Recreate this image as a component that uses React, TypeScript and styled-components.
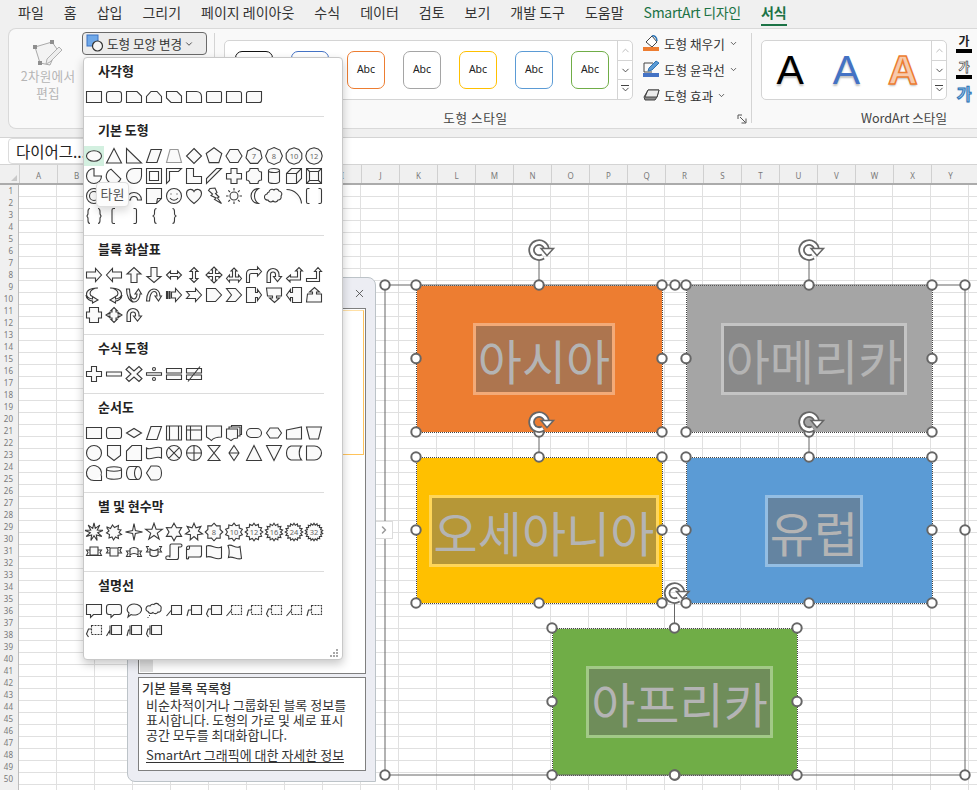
import styled, { createGlobalStyle } from 'styled-components';
import { ChevronDown, ChevronRight, ChevronUp, X } from 'lucide-react';

const GlobalStyle = createGlobalStyle`
    html, body {
        margin: 0;
        padding: 0;
        background: #ffffff;
    }
    * {
        box-sizing: border-box;
    }
`;

/* ---------- shape gallery data ---------- */

type ShapeIcon = { d: string; dash?: string; label?: string; muted?: boolean };

const star = (n: number, r1: number, r2?: number) => {
    const pts: string[] = [];
    const count = r2 ? n * 2 : n;
    for (let i = 0; i < count; i++) {
        const r = r2 && i % 2 === 1 ? r2 : r1;
        const a = (Math.PI * 2 * i) / count - Math.PI / 2;
        pts.push(`${(10 + r * Math.cos(a)).toFixed(1)} ${(10 + r * Math.sin(a)).toFixed(1)}`);
    }
    return `M${pts.join('L')}z`;
};

const circle = 'M2.5 10a7.5 7.5 0 1 0 15 0a7.5 7.5 0 1 0-15 0z';
const rect = 'M2.5 4.5h15v11h-15z';
const roundRect = 'M5 4.5h10a2.5 2.5 0 0 1 2.5 2.5v6a2.5 2.5 0 0 1-2.5 2.5h-10a2.5 2.5 0 0 1-2.5-2.5v-6a2.5 2.5 0 0 1 2.5-2.5z';
const softRect = 'M3.5 4.5h13a1 1 0 0 1 1 1v9a1 1 0 0 1-1 1h-13a1 1 0 0 1-1-1v-9a1 1 0 0 1 1-1z';
const smallBox = 'M7.5 4.5h10v9h-10z';

const p = (...paths: string[]): ShapeIcon[] => paths.map((d) => ({ d }));

const RECTANGLES = p(
    rect,
    roundRect,
    'M2.5 4.5h10.5l4.5 4.5v6.5h-15z',
    'M7 4.5h6l4.5 5v6h-15v-6z',
    'M2.5 4.5h10.5l4.5 4.5v6.5h-10.5l-4.5-4.5z',
    'M2.5 4.5h10a5 5 0 0 1 5 5v6h-15z',
    softRect,
    'M2.5 15.5v-11h13a2 2 0 0 1 2 2v9z',
    'M4.5 4.5h13v9a2 2 0 0 1-2 2h-13v-9a2 2 0 0 1 2-2z',
);

const BASIC: ShapeIcon[] = [
    { d: 'M2.5 10a7.5 5.2 0 1 0 15 0a7.5 5.2 0 1 0-15 0z' },
    { d: 'M10 2.5l7.5 14.5h-15z' },
    { d: 'M2.5 2.5l15 14.5h-15z' },
    { d: 'M7 3.5h10.5l-4.5 13h-10.5z' },
    { d: 'M6 3.5h8l3.5 13h-15z', muted: true },
    { d: 'M10 2.5l7.5 7.5l-7.5 7.5l-7.5-7.5z' },
    { d: star(5, 8.2) },
    { d: 'M6 3.5h8l4 6.5l-4 6.5h-8l-4-6.5z' },
    { d: star(7, 8.2), label: '7' },
    { d: star(8, 8.4), label: '8' },
    { d: star(10, 8.2), label: '10' },
    { d: star(12, 8.2), label: '12' },
    ...p(
        'M10 2.5a7.5 7.5 0 1 0 7.5 7.5h-7.5z',
        'M7 3.2l9.8 9.6a7.5 7.5 0 1 1-9.8-9.6z',
        'M17.5 2.5v7.5a7.5 7.5 0 1 1-7.5-7.5z',
        'M2.5 2.5h15v15h-15zM5.5 5.5v9h9v-9z',
        'M2.5 2.5h15l-3 3h-9v9l-3 3z',
        'M2.5 2.5h7v8h8v7h-15z',
        'M2.5 17.5v-5l10-10h5z',
        'M7 2.5h6v5h4.5v5.5h-4.5v4.5h-6v-4.5h-4.5v-5.5h4.5z',
        'M6 2.5h8a3.5 3.5 0 0 0 3.5 3.5v8a3.5 3.5 0 0 0-3.5 3.5h-8a3.5 3.5 0 0 0-3.5-3.5v-8a3.5 3.5 0 0 0 3.5-3.5z',
        'M4.5 4.5a5.5 2 0 0 1 11 0v11a5.5 2 0 0 1-11 0zM4.5 4.5a5.5 2 0 0 0 11 0',
        'M2.5 7.5l5-5h10v10l-5 5h-10zM2.5 7.5h10v10M12.5 7.5l5-5',
        'M2.5 2.5h15v15h-15zM5.5 5.5h9v9h-9zM2.5 2.5l3 3M17.5 2.5l-3 3M2.5 17.5l3-3M17.5 17.5l-3-3',
        `${circle}M5.5 10a4.5 4.5 0 1 0 9 0a4.5 4.5 0 1 0-9 0z`,
        `${circle}M5 5l10 10`,
        'M2.5 14a7.5 7.5 0 0 1 15 0h-4a3.5 3.5 0 0 0-7 0z',
        'M2.5 2.5h15v10l-5 5h-10zM17.5 12.5h-4l-1 5',
        `${circle}M7 7.5v1M13 7.5v1M6 12c2 3 6 3 8 0`,
        'M10 17.5c-4-3-7.5-6-7.5-10a4 4 0 0 1 7.5-2a4 4 0 0 1 7.5 2c0 4-3.5 7-7.5 10z',
        'M6 2.5l5-.5l2 4.5l-1.5 1l3.5 3.5l-1.5 1l4 5.5l-7-4l1.5-1.5l-5-2.5l1.5-1.5l-4-3.5z',
        'M6 10a4 4 0 1 0 8 0a4 4 0 1 0-8 0zM10 2v2.500M10 15.500v2.500M2 10h2.500M15.500 10h2.500M4.300 4.300l1.700 1.700M14 14l1.700 1.700M4.300 15.700l1.700-1.700M14 6l1.700-1.700',
        'M14.5 2.5a7.5 7.5 0 0 0 0 15a9 9 0 0 1 0-15z',
        'M5 6a3 3 0 0 1 5-2a3 3 0 0 1 5 1a3 3 0 0 1 2 5a3 3 0 0 1-3 4a3 3 0 0 1-5 1a3 3 0 0 1-5-1a3 3 0 0 1-1-6a3 3 0 0 1 2-2z',
        'M2.5 3.5a15 15 0 0 1 15 14',
        'M5.5 2.5h-1.5a1.5 1.5 0 0 0-1.5 1.5v12a1.5 1.5 0 0 0 1.5 1.5h1.5M14.5 2.5h1.5a1.5 1.5 0 0 1 1.5 1.5v12a1.5 1.5 0 0 1-1.5 1.5h-1.5',
        'M6 2.5c-2 0-2 1-2 3v2c0 1-1 2.5-1.5 2.5c.5 0 1.5 1.5 1.5 2.5v2c0 2 0 3 2 3M14 2.5c2 0 2 1 2 3v2c0 1 1 2.5 1.5 2.5c-.5 0-1.5 1.5-1.5 2.5v2c0 2 0 3-2 3',
        'M11 2.5h-1.5a1.5 1.5 0 0 0-1.5 1.5v12a1.5 1.5 0 0 0 1.5 1.5h1.5',
        'M9.5 2.5h1.5a1.5 1.5 0 0 1 1.5 1.5v12a1.5 1.5 0 0 1-1.5 1.5h-1.5',
        'M12.5 2.5c-2 0-2 1-2 3v2c0 1-1 2.5-2 2.5c1 0 2 1.5 2 2.5v2c0 2 0 3 2 3',
        'M8.5 2.5c2 0 2 1 2 3v2c0 1 1 2.5 2 2.5c-1 0-2 1.5-2 2.5v2c0 2 0 3-2 3',
    ),
];

const ARROWS = p(
    'M2.5 7h9v-3.5l6 6.5l-6 6.5v-3.5h-9z',
    'M17.5 7h-9v-3.5l-6 6.5l6 6.5v-3.5h9z',
    'M7 17.5v-8.5h-4l7-6.5l7 6.5h-4v8.5z',
    'M7 2.5v9h-4l7 6l7-6h-4v-9z',
    'M2.5 10l4-4v2.5h7v-2.5l4 4l-4 4v-2.5h-7v2.5z',
    'M10 2.5l4 4h-2.5v7h2.5l-4 4l-4-4h2.5v-7h-2.5z',
    'M10 2l3 3h-1.5v3.5h3.5v-1.5l3 3l-3 3v-1.5h-3.5v3.5h1.5l-3 3l-3-3h1.5v-3.5h-3.5v1.5l-3-3l3-3v1.5h3.5v-3.5h-1.5z',
    'M10 3l3 3h-1.5v6h3v-2l3 3.5l-3 3.5v-2h-9v2l-3-3.5l3-3.5v2h3v-6h-1.5z',
    'M2.5 17.5v-9a4 4 0 0 1 4-4h7v-2.5l4 4.5l-4 4.5v-2.5h-6a2 2 0 0 0-2 2v7z',
    'M3 17.5v-8a6 6 0 0 1 12 0v2h2.5l-4 5l-4-5h2v-2a2.5 2.5 0 0 0-5 0v8z',
    'M2.5 13.5l4-3.5v2h7v-6h-2l3.5-3.5l3.5 3.5h-2v9h-10.5v2z',
    'M2.5 13.5h10v-7h-2l3.5-4l3.5 4h-2v10h-13z',
    'M14 3C7 2.5 2.5 5.5 2.5 9c0 3 2.5 4.5 6 5v-2.5l5.5 3.5l-5.5 3v-2c-2 0-6.5-2-6.5-6M14 3C10 3 6 5 6 8.5c0 1.500 1 2.500 2.500 3',
    'M6 3c7-.5 11.500 2.500 11.500 6c0 3-2.500 4.500-6 5v-2.500l-5.500 3.500l5.500 3v-2c2 0 6.500-2 6.500-6M6 3c4 0 8 2 8 5.500c0 1.500-1 2.500-2.500 3',
    'M2.5 4c0 7 3 13 7.500 13c3.500 0 6-4 6-8h1.500l-3-5l-3.500 5h2c0 3-1.500 5-3 5c-2.500 0-4.500-4-4.500-10zM10 17c-2 0-4-3-4-8',
    'M2.5 16c0-7 3-12 7.500-12c3.500 0 6 3 6 7h1.500l-3 5l-3.500-5h2c0-3-1.500-4.500-3-4.500c-2.500 0-4.500 4-4.500 9.500z',
    'M2.5 6.500h1v7h-1zM5 6.500h1v7h-1zM7.5 7h4v-3.5l6 6.500l-6 6.500v-3.500h-4z',
    'M2.5 6.500h9v-3l6 6.500l-6 6.500v-3h-9l3-3.500z',
    'M2.5 3.5h9l6 6.5l-6 6.5h-9z',
    'M2.5 3.5h9l6 6.5l-6 6.5h-9l5-6.5z',
    'M2.5 2.5h9v5h2v-3l4 5.5l-4 5.5v-3h-2v5h-9z',
    'M2.5 3h15v8h-5v2h3l-5 4.5l-5-4.5h3v-2h-5z',
    'M17.5 2.5h-9v5h-2v-3l-4 5.5l4 5.5v-3h2v5h9z',
    'M2.5 17h15v-8h-5v-2h3l-5-4.5l-5 4.5h3v2h-5z',
    'M5.5 2.5h9v4.5h3v6h-3v4.5h-9v-4.5h-3v-6h3z',
    'M10 2.5l3 3h-1v1.5h2v2h1v-1l3 2l-3 2v-1h-1v2h-2v1.5h1l-3 3l-3-3h1v-1.5h-2v-2h-1v1l-3-2l3-2v1h1v-2h2v-1.5h-1z',
    'M3 16.5v-7a6 6 0 0 1 12 0v1.5h2.5l-4 5l-4-5h2v-1.5a2.5 2.5 0 0 0-5 0v7z',
);

const EQUATIONS = p(
    'M7.5 2.5h5v5h5v5h-5v5h-5v-5h-5v-5h5z',
    'M2.5 8h15v4h-15z',
    'M5 2.5l5 4.5l5-4.5l3 3l-5 4.5l5 4.5l-3 3l-5-4.5l-5 4.5l-3-3l5-4.5l-5-4.5z',
    'M2.5 8.7h15v2.6h-15zM8.5 5a1.5 1.5 0 1 0 3 0a1.5 1.5 0 1 0-3 0zM8.5 15a1.5 1.5 0 1 0 3 0a1.5 1.5 0 1 0-3 0z',
    'M2.5 4.5h15v4.5h-15zM2.5 11h15v4.5h-15z',
    'M2.5 4.5h15v4.5h-15zM2.5 11h15v4.5h-15zM4 17.5l12-15',
);

const FLOWCHART = p(
    rect,
    roundRect,
    'M2.5 10l7.5-4.5l7.5 4.5l-7.5 4.5z',
    'M7 3.5h10.5l-4.5 13h-10.5z',
    'M2.5 3h15v14h-15zM5.5 3v14M14.5 3v14',
    'M2.5 3h15v14h-15zM2.5 7h15M6.5 3v14',
    'M2.5 3h15v11c-5 0-8 1-10 3.5c-2-1.5-3-2.5-5-3.5z',
    'M2.5 6h11v9c-3 0-5 1-6.5 2.5c-1.5-1-2.5-2-4.5-2.5zM5 6v-2h11v9h-2.5M7.5 4v-1.5h10v9h-1.5',
    'M7 5.5h6a4.5 4.5 0 0 1 0 9h-6a4.5 4.5 0 0 1 0-9z',
    'M6 5l-3.5 5l3.5 5h8l3.5-5l-3.5-5z',
    'M2.5 7l15-3v12h-15z',
    'M2.5 4h15l-3 12h-9z',
    circle,
    'M3.5 2.5h13v10l-6.5 5l-6.5-5z',
    'M8 2.5h9.5v15h-15v-9.5z',
    'M2.5 5c4 3 10-3 15 0v10c-5-3-11 3-15 0z',
    `${circle}M4.7 4.7l10.6 10.6M4.7 15.3l10.6-10.6`,
    `${circle}M2.5 10h15M10 2.5v15`,
    'M4 2.5h12l-12 15h12z',
    'M10 2.5l5 7.5l-5 7.5l-5-7.5zM5 10h10',
    'M10 2.5l7.5 15h-15z',
    'M2.5 2.5h15l-7.5 15z',
    'M7 3h10.5c-3 3-3 11 0 14h-10.5c-6-2-6-12 0-14z',
    'M2.5 3h8a7 7 0 0 1 0 14h-8z',
    'M17.5 17.5h-7.5a7.5 7.5 0 1 1 7-5M10 17.5h7.5v-5',
    'M2.5 6c0-3 15-3 15 0v8c0 3-15 3-15 0zM2.5 6c0 3 15 3 15 0',
    'M6 3.5h8c2 0 3.5 3 3.5 6.5s-1.5 6.5-3.5 6.5h-8c-2 0-3.5-3-3.5-6.5s1.5-6.5 3.5-6.5zM14 3.5c-2 0-3.5 3-3.5 6.5s1.5 6.5 3.5 6.5',
    'M7 3h6c3 0 4.5 3.5 4.5 7s-1.5 7-4.5 7h-6l-4.5-7z',
);

const STARS: ShapeIcon[] = [
    { d: star(9, 9, 3.8) },
    { d: 'M3 5l3.5 1.5l2-3.5l2 2.5l4-2l-.5 4l3 .5l-2 2.5l2.5 2l-3.5 1l.5 3l-3-1.5l-2 3l-1.5-3l-3 1l.5-3.5l-3-1.5l2.5-2l-2-3z' },
    { d: star(4, 8.5, 2) },
    { d: star(5, 8.8, 3.5) },
    { d: star(6, 8.8, 5) },
    { d: star(7, 8.8, 4.5) },
    { d: star(8, 8.8, 6.6), label: '8' },
    { d: star(10, 8.8, 6.6), label: '10' },
    { d: star(12, 8.8, 6.6), label: '12' },
    { d: star(14, 8.8, 6.6), label: '16' },
    { d: star(16, 8.8, 6.8), label: '24' },
    { d: star(18, 8.8, 7), label: '32' },
    ...p(
        'M6 5h8v8h-8zM6 8h-3.5l1.5 2.5l-1.5 3h7.5M14 8h3.5l-1.5 2.5l1.5 3h-7.5M6 13l2 .5M14 13l-2 .5',
        'M6 6h8v8h-8zM6 11h-3.5l1.5-2.5l-1.5-3h3.5M14 11h3.5l-1.5-2.5l1.5-3h-3.5',
        'M6 7c2-2 6-2 8 0v6c-2-2-6-2-8 0zM6 9h-3.5l1.5 2.5l-1.5 3h4.5M14 9h3.5l-1.5 2.5l1.5 3h-4.5',
        'M6 13c2 2 6 2 8 0v-6c-2 2-6 2-8 0zM6 10h-3.5l1.5-2.5l-1.5-3h2.5M14 10h3.5l-1.5-2.5l1.5-3h-2.5',
        'M6 3.5a1.5 1.5 0 0 1 1.5-1.5h9a1.5 1.5 0 0 1 0 3h-2v10.5a2 2 0 0 1-2 2h-9a1.5 1.5 0 0 1 0-3.5h2.5zM4.5 14a1.5 1.5 0 0 1 1.5 1.5',
        'M2.5 6a2 2 0 0 1 2-2h13v9a2 2 0 0 1-2 2h-11v1.5a1.5 1.5 0 0 1-2 0zM2.5 6a1.5 1.5 0 0 0 3 0v-2',
        'M2.5 4c5-2 10 4 15 1v11c-5 3-10-3-15-1z',
        'M4 3.5c4-2 8 4 12 1l1.5 12c-4 2-9-3-13-1c1-4 1-8-.5-12z',
    ),
];

const CALLOUTS: ShapeIcon[] = [
    { d: 'M2.5 3.5h15v10h-8l-3 3v-3h-4z' },
    { d: 'M5 3.5h10a2.5 2.5 0 0 1 2.5 2.5v5a2.5 2.5 0 0 1-2.5 2.5h-5l-3 3v-3h-2a2.5 2.5 0 0 1-2.5-2.5v-5a2.5 2.5 0 0 1 2.5-2.5z' },
    { d: 'M10 3a7.5 5.5 0 1 1-3 10.5l-3 2.5l1-4a7.5 5.5 0 0 1 5-9z' },
    { d: 'M6 5a3 3 0 0 1 4-1.5a3 3 0 0 1 5 .5a3 3 0 0 1 2 4a2.5 2.5 0 0 1-3 3a3 3 0 0 1-5 .5a3 3 0 0 1-5-1a2.5 2.5 0 0 1 2-5.5zM5 14.5h1M3.5 16.5h1' },
    { d: `${smallBox}M7.5 9l-5 6` },
    { d: `${smallBox}M7.5 9h-3l-1.5 6` },
    { d: `${smallBox}M7.5 8h-3l-2 5l2 3` },
    { d: 'M7.5 9l-5 6', dash: smallBox },
    { d: 'M7.5 9h-3l-1.5 6', dash: smallBox },
    { d: 'M7.5 8h-3l-2 5l2 3', dash: smallBox },
    { d: 'M7.5 9l-5 6', dash: smallBox },
    { d: 'M7.5 9h-3l-1.5 6', dash: smallBox },
    { d: 'M7.5 8h-3l-2 5l2 3', dash: smallBox },
    { d: `${smallBox}M6 4.5v9M6 9l-3.5 6` },
    { d: `${smallBox}M6 4.5v9M6 9h-1.5l-1.5 6` },
    { d: `${smallBox}M6 4.5v9M6 8h-2l-1.5 5l2 3` },
];

const SECTIONS = [
    { title: '사각형', icons: RECTANGLES },
    { title: '기본 도형', icons: BASIC },
    { title: '블록 화살표', icons: ARROWS },
    { title: '수식 도형', icons: EQUATIONS },
    { title: '순서도', icons: FLOWCHART },
    { title: '별 및 현수막', icons: STARS },
    { title: '설명선', icons: CALLOUTS },
];

/* ---------- page and ribbon ---------- */

const Page = styled.div`
    position: relative;
    display: flex;
    flex-direction: column;
    width: 977px;
    height: 790px;
    overflow: hidden;
    background: #f0f0f0;
    color: #333;
    font-family: 'Noto Sans CJK KR', 'Noto Sans', sans-serif;
`;

const TabBar = styled.div`
    display: flex;
    align-items: center;
    gap: 20px;
    height: 28px;
    padding: 0 0 5px 18px;
    font-size: 14px;
`;

const Tab = styled.div<{ $context?: boolean; $active?: boolean }>`
    position: relative;
    white-space: nowrap;
    color: ${(p) => (p.$context || p.$active ? '#1c7346' : '#333')};
    font-weight: ${(p) => (p.$active ? 700 : 400)};
    letter-spacing: ${(p) => (p.$context ? '-0.3px' : '0')};

    ${(p) =>
        p.$active &&
        `&::after {
            content: '';
            position: absolute;
            left: 0;
            right: 0;
            bottom: -4px;
            height: 2px;
            background: #1c7346;
        }`}
`;

const Ribbon = styled.div`
    display: flex;
    flex: none;
    height: 101px;
    margin-left: 8px;
    background: #f9f9f9;
    border: 1px solid #d9d9d9;
    border-right: none;
    border-radius: 8px 0 0 8px;
    font-size: 12.6px;
`;

const EditGroup = styled.div`
    display: flex;
    align-items: flex-start;
    width: 205px;
    padding-left: 5px;
`;

const EditTool = styled.div`
    display: flex;
    flex-direction: column;
    align-items: center;
    width: 68px;
    padding-top: 10px;
    color: #b5b5b5;
    letter-spacing: 0.2px;
    line-height: 17px;
    text-align: center;
`;

const EditIcon = styled.svg`
    width: 32px;
    height: 28px;
`;

const ChangeShapeButton = styled.div`
    display: flex;
    align-items: center;
    gap: 2px;
    width: 125px;
    height: 23px;
    margin-top: 3px;
    padding-left: 3px;
    background: #ececec;
    border: 1px solid #6a6a6a;
    border-radius: 4px;
    white-space: nowrap;
    color: #333;
`;

const GroupDivider = styled.div`
    flex: none;
    width: 1px;
    margin: 4px 0 5px;
    background: #d4d4d4;
`;

const RibbonGroup = styled.div<{ $width: number }>`
    display: flex;
    flex-direction: column;
    flex: none;
    width: ${(p) => p.$width}px;
    padding-left: 9px;
`;

const GroupBody = styled.div`
    display: flex;
    height: 79px;
`;

const GroupFooter = styled.div<{ $end?: number }>`
    display: flex;
    align-items: center;
    justify-content: ${(p) => (p.$end ? 'flex-end' : 'center')};
    gap: 4px;
    height: 19px;
    padding-right: ${(p) => p.$end ?? 14}px;
    color: #444;
    white-space: nowrap;
`;

const FooterLabel = styled.span`
    flex: 1;
    padding-right: 6px;
    letter-spacing: 0.6px;
    text-align: center;
`;

const Gallery = styled.div<{ $width: number }>`
    display: flex;
    flex: none;
    width: ${(p) => p.$width}px;
    height: 60px;
    margin-top: 11px;
    background: #ffffff;
    border: 1px solid #d4d4d4;
    border-radius: 5px;
    overflow: hidden;
`;

const GalleryItems = styled.div`
    display: flex;
    flex: 1;
    align-items: center;
    gap: 18px;
    padding-left: 10px;
`;

const StyleSwatch = styled.div<{ $color: string }>`
    display: flex;
    align-items: flex-start;
    justify-content: center;
    flex: none;
    width: 38px;
    height: 38px;
    padding-top: 10px;
    background: #ffffff;
    border: 1px solid ${(p) => p.$color};
    border-radius: 7px;
    color: #222;
    font-family: 'Noto Sans', sans-serif;
    font-size: 10.5px;
    line-height: 14px;
`;

const ScrollColumn = styled.div`
    display: flex;
    flex-direction: column;
    flex: none;
    width: 15px;
    border-left: 1px solid #d4d4d4;
`;

const ScrollButton = styled.div<{ $muted?: boolean }>`
    position: relative;
    display: flex;
    flex: 1;
    align-items: center;
    justify-content: center;
    color: ${(p) => (p.$muted ? '#b8b8b8' : '#444')};
    border-bottom: 1px solid #d4d4d4;

    &:last-child {
        border-bottom: none;
    }
`;

const MoreBar = styled.span`
    position: absolute;
    top: 5px;
    left: 3px;
    width: 8px;
    height: 1px;
    background: #444;
`;

const ShapeActions = styled.div`
    display: flex;
    flex-direction: column;
    margin-left: 10px;
    padding-top: 1px;
`;

const ShapeAction = styled.div`
    display: flex;
    align-items: center;
    height: 26px;
    gap: 4px;
    white-space: nowrap;
    color: #333;
`;

const ActionIcon = styled.svg`
    flex: none;
    width: 17px;
    height: 18px;
`;

const Launcher = styled.svg`
    flex: none;
    width: 10px;
    height: 10px;
    margin-right: -10px;
    margin-top: 3px;
`;

const WordArtItems = styled.div`
    display: flex;
    flex: 1;
    align-items: center;
`;

const WordArtLetter = styled.div<{ $color: string; $outline?: string }>`
    flex: 1;
    text-align: center;
    font-family: 'Liberation Sans', sans-serif;
    font-size: 41px;
    line-height: 48px;
    color: ${(p) => p.$color};
    text-shadow: 0 2px 2px rgba(0, 0, 0, 0.25);
    ${(p) => p.$outline && `-webkit-text-stroke: 1.5px ${p.$outline}; font-weight: 700;`}
`;

const TextTools = styled.div`
    display: flex;
    flex-direction: column;
    flex: none;
    width: 16px;
    margin: 4px 0 0 9px;
`;

const TextTool = styled.div<{ $hollow?: boolean; $bar?: boolean; $glow?: boolean }>`
    height: 26px;
    font-size: 12px;
    font-weight: 700;
    line-height: 16px;
    text-align: center;
    color: ${(p) => (p.$glow ? '#9dc3e6' : p.$hollow ? '#ffffff' : '#222')};
    ${(p) => p.$bar && 'border-bottom: 4px solid #000; height: 20px; margin-bottom: 6px;'}
    ${(p) => p.$hollow && '-webkit-text-stroke: 0.6px #222;'}
    ${(p) => p.$glow && 'font-size: 16px; -webkit-text-stroke: 1px #2e75b6; text-shadow: 0 0 2px #9dc3e6;'}
`;

const RibbonGap = styled.div`
    flex: none;
    height: 8px;
`;

const FormulaBar = styled.div`
    display: flex;
    flex: none;
    height: 28px;
    padding-left: 8px;
    background: #ffffff;
    border-top: 1px solid #d4d4d4;
    border-bottom: 1px solid #d4d4d4;
`;

const NameBox = styled.div`
    width: 110px;
    padding-left: 7px;
    background: #ffffff;
    border: 1px solid #dcdcdc;
    border-radius: 4px;
    color: #222;
    font-size: 15.5px;
    line-height: 25px;
`;

/* ---------- sheet ---------- */

const ColumnHeaders = styled.div`
    display: flex;
    flex: none;
    height: 20px;
    background: #f0f0f0;
    border-bottom: 2px solid #ababab;
`;

const CornerCell = styled.div`
    position: relative;
    flex: none;
    width: 19px;

    &::after {
        content: '';
        position: absolute;
        right: 2px;
        bottom: 2px;
        border-left: 6px solid transparent;
        border-bottom: 6px solid #c9c9c9;
    }
`;

const ColumnCell = styled.div`
    flex: none;
    width: 38px;
    padding-top: 3px;
    border-left: 1px solid #d0d0d0;
    color: #7a7a7a;
    font-family: 'Noto Sans', sans-serif;
    font-size: 8px;
    line-height: 16px;
    text-align: center;
`;

const SheetBody = styled.div`
    display: flex;
    flex: 1;
    min-height: 0;
`;

const RowHeaders = styled.div`
    flex: none;
    width: 19px;
    background: #f0f0f0;
    border-right: 1px solid #bdbdbd;
`;

const RowCell = styled.div`
    height: 12px;
    padding-right: 5px;
    color: #7a7a7a;
    font-family: 'Noto Sans', sans-serif;
    font-size: 8px;
    line-height: 12px;
    text-align: right;
`;

const GridArea = styled.div`
    flex: 1;
    background-color: #ffffff;
    background-image:
        linear-gradient(to right, #e0e0e0 1px, transparent 1px),
        linear-gradient(to bottom, #e0e0e0 1px, transparent 1px);
    background-size: 38px 12px;
    background-position: -1px -1px;
`;

/* ---------- diagram ---------- */

const DiagramShape = styled.div<{ $x: number; $y: number; $w: number; $h: number; $color: string }>`
    position: absolute;
    left: ${(p) => p.$x + 1}px;
    top: ${(p) => p.$y + 1}px;
    width: ${(p) => p.$w - 1}px;
    height: ${(p) => p.$h - 1}px;
    display: flex;
    align-items: center;
    justify-content: center;
    padding-left: 9px;
    background: ${(p) => p.$color};
    outline: 1px dotted #444;
`;

const ShapeLabel = styled.div`
    display: flex;
    align-items: center;
    height: 72px;
    padding: 0 2px;
    background: rgba(110, 110, 110, 0.5);
    background-clip: padding-box;
    border: 3px solid rgba(255, 255, 255, 0.35);
    color: #b4b4b4;
    font-size: 48px;
    line-height: 60px;
    white-space: nowrap;
`;

const SelectionLayer = styled.svg`
    position: absolute;
    top: 0;
    left: 0;
    width: 977px;
    height: 790px;
    pointer-events: none;
`;

/* ---------- text pane ---------- */

const TextPane = styled.div`
    position: absolute;
    left: 127px;
    top: 277px;
    display: flex;
    flex-direction: column;
    width: 249px;
    height: 505px;
    padding: 0 9px 10px 10px;
    background: #ecedf3;
    border: 1px solid #bcc3c8;
    border-radius: 0 8px 0 8px;
`;

const PaneHeader = styled.div`
    display: flex;
    align-items: center;
    justify-content: flex-end;
    flex: none;
    height: 30px;
    color: #444;
`;

const PaneEditor = styled.div`
    display: flex;
    flex-direction: column;
    justify-content: space-between;
    flex: 1;
    padding: 1px;
    background: #ffffff;
    border: 1px solid #7f7f7f;
`;

const EditorHighlight = styled.div`
    height: 145px;
    border-top: 1px solid #ffe0a6;
    border-right: 1px solid #ffc35a;
    border-bottom: 1px solid #ffc35a;
`;

const EditorScrollNub = styled.div`
    width: 13px;
    height: 13px;
    background: #e0e0e0;
`;

const PaneInfo = styled.div`
    flex: none;
    height: 94px;
    margin-top: 3px;
    padding: 1px 3px 0;
    background: #ffffff;
    border: 1px solid #7f7f7f;
    color: #333;
    font-size: 13px;
    line-height: 15px;
`;

const InfoTitle = styled.div`
    height: 18px;
    line-height: 17px;
    font-weight: 500;
`;

const InfoBody = styled.div`
    padding-left: 4px;
    white-space: nowrap;
`;

const InfoLink = styled.div`
    display: inline-block;
    margin: 5px 0 0 4px;
    border-bottom: 1px solid #333;
    line-height: 15px;
    white-space: nowrap;
`;

const PaneToggle = styled.div`
    position: absolute;
    left: 376px;
    top: 521px;
    display: flex;
    align-items: center;
    justify-content: center;
    width: 17px;
    height: 18px;
    background: #ffffff;
    border: 1px solid #dcdcdc;
    border-left: none;
    color: #9a9a9a;
`;

/* ---------- shape menu ---------- */

const ShapeMenu = styled.div`
    position: absolute;
    left: 83px;
    top: 57px;
    width: 260px;
    height: 603px;
    padding-top: 1px;
    background: #ffffff;
    border: 1px solid #c8c8c8;
    border-radius: 4px;
    box-shadow: 0 4px 10px rgba(0, 0, 0, 0.22);
`;

const MenuSection = styled.div`
    padding-top: 1px;
`;

const MenuTitle = styled.div`
    height: 24px;
    margin-bottom: 3px;
    padding-left: 14px;
    color: #222;
    font-size: 13px;
    font-weight: 700;
    line-height: 22px;
`;

const MenuGrid = styled.div`
    display: grid;
    grid-template-columns: repeat(12, 20px);
    grid-auto-rows: 20px;
`;

const MenuCell = styled.div<{ $hover?: boolean }>`
    width: 20px;
    height: 20px;
    background: ${(p) => (p.$hover ? '#d3f0e0' : 'transparent')};
`;

const CellIcon = styled.svg<{ $muted?: boolean }>`
    display: block;
    width: 20px;
    height: 20px;
    fill: #fafafa;
    stroke: ${(p) => (p.$muted ? '#999' : '#3a3a3a')};
    stroke-width: 1.1;
    stroke-linejoin: miter;
`;

const CellLabel = styled.text`
    fill: #666;
    stroke: none;
    font-family: 'Noto Sans', sans-serif;
    font-size: 7.5px;
    text-anchor: middle;
`;

const MenuDivider = styled.div`
    width: 240px;
    height: 1px;
    margin: 9px 0 1px;
    background: #dcdcdc;
`;

const MenuGrip = styled.svg`
    position: absolute;
    right: 3px;
    bottom: 1px;
    width: 9px;
    height: 9px;
    fill: #a8a8a8;
`;

const Tooltip = styled.div`
    position: absolute;
    left: 96px;
    top: 182px;
    width: 33px;
    height: 25px;
    background: #fcfcfc;
    border: 1px solid #dedede;
    border-radius: 4px;
    box-shadow: 0 4px 8px rgba(0, 0, 0, 0.15);
    color: #555;
    font-size: 13px;
    line-height: 22px;
    text-align: center;
`;

/* ---------- components ---------- */

const TABS = ['파일', '홈', '삽입', '그리기', '페이지 레이아웃', '수식', '데이터', '검토', '보기', '개발 도구', '도움말'];
const COLUMNS = 'ABCDEFGHIJKLMNOPQRSTUVWXY'.split('');
const SWATCHES = ['#111111', '#4472c4', '#ed7d31', '#a5a5a5', '#ffc000', '#5b9bd5', '#70ad47'];

const BOXES = [
    { name: '아시아', color: '#ed7d31', x: 416, y: 285, w: 246, h: 147 },
    { name: '아메리카', color: '#a5a5a5', x: 686, y: 285, w: 246, h: 147 },
    { name: '오세아니아', color: '#ffc000', x: 416, y: 457, w: 246, h: 146 },
    { name: '유럽', color: '#5b9bd5', x: 686, y: 457, w: 246, h: 146 },
    { name: '아프리카', color: '#70ad47', x: 552, y: 628, w: 245, h: 147 },
];

const FRAME = { x: 385, y: 285, w: 580, h: 490 };

function handlesOf(b: { x: number; y: number; w: number; h: number }) {
    const xs = [b.x, b.x + b.w / 2, b.x + b.w];
    const ys = [b.y, b.y + b.h / 2, b.y + b.h];
    const out: [number, number][] = [];
    ys.forEach((y, j) =>
        xs.forEach((x, i) => {
            if (i !== 1 || j !== 1) out.push([x, y]);
        }),
    );
    return out;
}

function RotateHandle({ x, y }: { x: number; y: number }) {
    return (
        <g transform={`translate(${x} ${y})`}>
            <path d="M4 6.5A7.5 7.5 0 1 1 7.5 -1" fill="none" stroke="#666" strokeWidth="6.5" />
            <path d="M4 6.5A7.5 7.5 0 1 1 7.5 -1" fill="none" stroke="#fff" strokeWidth="3" />
            <path d="M2 -1.5H14.5L8 5.5z" fill="#fff" stroke="#666" strokeWidth="1.5" />
        </g>
    );
}

function SelectionHandles() {
    const handles = [...handlesOf(FRAME), ...BOXES.flatMap(handlesOf)];
    return (
        <SelectionLayer viewBox="0 0 977 790">
            <rect x={FRAME.x} y={FRAME.y} width={FRAME.w} height={FRAME.h} fill="none" stroke="#666" />
            {BOXES.map((b) => (
                <line key={b.name} x1={b.x + b.w / 2} x2={b.x + b.w / 2} y1={b.y} y2={b.y - 30} stroke="#666" />
            ))}
            {handles.map(([x, y], i) => (
                <circle key={i} cx={x} cy={y} r="4.7" fill="#fff" stroke="#666" strokeWidth="2" />
            ))}
            {BOXES.map((b) => (
                <RotateHandle key={b.name} x={b.x + b.w / 2} y={b.y - 35} />
            ))}
        </SelectionLayer>
    );
}

function Swatches() {
    return (
        <GalleryItems>
            {SWATCHES.map((c) => (
                <StyleSwatch key={c} $color={c}>
                    Abc
                </StyleSwatch>
            ))}
        </GalleryItems>
    );
}

function GalleryScroll() {
    return (
        <ScrollColumn>
            <ScrollButton $muted>
                <ChevronUp size={11} />
            </ScrollButton>
            <ScrollButton>
                <ChevronDown size={11} />
            </ScrollButton>
            <ScrollButton>
                <MoreBar />
                <ChevronDown size={11} />
            </ScrollButton>
        </ScrollColumn>
    );
}

function RibbonBar() {
    return (
        <Ribbon>
            <EditGroup>
                <EditTool>
                    <EditIcon viewBox="0 0 32 28">
                        <path d="M3 8L20 3L25 10L18 26L8 24z" fill="#f3f3f3" stroke="#aaa" />
                        <path d="M1 6h4v4h-4zM18 1h4v4h-4zM6 22h4v4h-4z" fill="#8f8f8f" />
                        <path d="M14 25l1-5L27 8l3 3L18 23z" fill="#eee" stroke="#b0b0b0" />
                    </EditIcon>
                    <span>2차원에서</span>
                    <span>편집</span>
                </EditTool>
                <ChangeShapeButton>
                    <svg width="19" height="19" viewBox="0 0 19 19">
                        <rect x="1" y="1" width="11" height="11" fill="#6fa8e8" stroke="#3a73c4" />
                        <circle cx="11.5" cy="12" r="5" fill="#f5f5f5" stroke="#333" strokeWidth="1.2" />
                    </svg>
                    도형 모양 변경
                    <ChevronDown size={10} strokeWidth={2} />
                </ChangeShapeButton>
            </EditGroup>
            <GroupDivider />
            <RibbonGroup $width={536}>
                <GroupBody>
                    <Gallery $width={409}>
                        <Swatches />
                        <GalleryScroll />
                    </Gallery>
                    <ShapeActions>
                        <ShapeAction>
                            <ActionIcon viewBox="0 0 17 18">
                                <path d="M3 8L9 2l5 6l-5 5z" fill="#fff" stroke="#444" />
                                <path d="M9 2c2-1 5 1 5 5" fill="none" stroke="#2e75b6" strokeWidth="1.5" />
                                <rect x="0" y="13" width="16" height="4" fill="#ed7d31" />
                            </ActionIcon>
                            도형 채우기
                            <ChevronDown size={9} strokeWidth={2} />
                        </ShapeAction>
                        <ShapeAction>
                            <ActionIcon viewBox="0 0 17 18">
                                <path d="M1 12V3h9M1 12h8" fill="none" stroke="#444" />
                                <path d="M5 11l1-3l7-7l3 2l-7 7z" fill="#5b9bd5" stroke="#2e75b6" />
                                <rect x="0" y="13" width="16" height="4" fill="#4472c4" />
                            </ActionIcon>
                            도형 윤곽선
                            <ChevronDown size={9} strokeWidth={2} />
                        </ShapeAction>
                        <ShapeAction>
                            <ActionIcon viewBox="0 0 17 18">
                                <path d="M1 11l4-7h11l-2 7l-2 3H2z" fill="#8c8c8c" stroke="#444" />
                                <path d="M5 4h11l-2 7H2z" fill="#ececec" stroke="#444" />
                            </ActionIcon>
                            도형 효과
                            <ChevronDown size={9} strokeWidth={2} />
                        </ShapeAction>
                    </ShapeActions>
                </GroupBody>
                <GroupFooter>
                    <FooterLabel>도형 스타일</FooterLabel>
                    <Launcher viewBox="0 0 10 10">
                        <path d="M1 5V1h4M3 3l5.5 5.5M9 4.5V9H4.5" fill="none" stroke="#555" />
                    </Launcher>
                </GroupFooter>
            </RibbonGroup>
            <GroupDivider />
            <RibbonGroup $width={225}>
                <GroupBody>
                    <Gallery $width={186}>
                        <WordArtItems>
                            <WordArtLetter $color="#000">A</WordArtLetter>
                            <WordArtLetter $color="#4472c4">A</WordArtLetter>
                            <WordArtLetter $color="#f7caac" $outline="#ed7d31">
                                A
                            </WordArtLetter>
                        </WordArtItems>
                        <GalleryScroll />
                    </Gallery>
                    <TextTools>
                        <TextTool $bar>가</TextTool>
                        <TextTool $bar $hollow>
                            가
                        </TextTool>
                        <TextTool $glow>가</TextTool>
                    </TextTools>
                </GroupBody>
                <GroupFooter $end={30}>WordArt 스타일</GroupFooter>
            </RibbonGroup>
        </Ribbon>
    );
}

function ShapeDropdown() {
    return (
        <ShapeMenu>
            {SECTIONS.map((section, s) => (
                <MenuSection key={section.title}>
                    <MenuTitle>{section.title}</MenuTitle>
                    <MenuGrid>
                        {section.icons.map((icon, i) => (
                            <MenuCell key={i} $hover={s === 1 && i === 0}>
                                <CellIcon viewBox="0 0 20 20" $muted={icon.muted}>
                                    <path d={icon.d} />
                                    {icon.dash && <path d={icon.dash} strokeDasharray="2 1" />}
                                    {icon.label && (
                                        <CellLabel x="10" y="12.7">
                                            {icon.label}
                                        </CellLabel>
                                    )}
                                </CellIcon>
                            </MenuCell>
                        ))}
                    </MenuGrid>
                    {s < SECTIONS.length - 1 && <MenuDivider />}
                </MenuSection>
            ))}
            <MenuGrip viewBox="0 0 9 9">
                <rect x="6" y="0" width="2" height="2" />
                <rect x="3" y="3" width="2" height="2" />
                <rect x="6" y="3" width="2" height="2" />
                <rect x="0" y="6" width="2" height="2" />
                <rect x="3" y="6" width="2" height="2" />
                <rect x="6" y="6" width="2" height="2" />
            </MenuGrip>
        </ShapeMenu>
    );
}

export default function App() {
    return (
        <Page>
            <GlobalStyle />
            <TabBar>
                {TABS.map((t) => (
                    <Tab key={t}>{t}</Tab>
                ))}
                <Tab $context>SmartArt 디자인</Tab>
                <Tab $active>서식</Tab>
            </TabBar>
            <RibbonBar />
            <RibbonGap />
            <FormulaBar>
                <NameBox>다이어그...</NameBox>
            </FormulaBar>
            <ColumnHeaders>
                <CornerCell />
                {COLUMNS.map((c) => (
                    <ColumnCell key={c}>{c}</ColumnCell>
                ))}
            </ColumnHeaders>
            <SheetBody>
                <RowHeaders>
                    {Array.from({ length: 50 }, (_, i) => (
                        <RowCell key={i}>{i + 1}</RowCell>
                    ))}
                </RowHeaders>
                <GridArea />
            </SheetBody>

            {BOXES.map((b) => (
                <DiagramShape key={b.name} $x={b.x} $y={b.y} $w={b.w} $h={b.h} $color={b.color}>
                    <ShapeLabel>{b.name}</ShapeLabel>
                </DiagramShape>
            ))}
            <SelectionHandles />

            <TextPane>
                <PaneHeader>
                    <X size={13} strokeWidth={1.5} />
                </PaneHeader>
                <PaneEditor>
                    <EditorHighlight />
                    <EditorScrollNub />
                </PaneEditor>
                <PaneInfo>
                    <InfoTitle>기본 블록 목록형</InfoTitle>
                    <InfoBody>
                        비순차적이거나 그룹화된 블록 정보를
                        <br />
                        표시합니다. 도형의 가로 및 세로 표시
                        <br />
                        공간 모두를 최대화합니다.
                    </InfoBody>
                    <InfoLink>SmartArt 그래픽에 대한 자세한 정보</InfoLink>
                </PaneInfo>
            </TextPane>
            <PaneToggle>
                <ChevronRight size={12} strokeWidth={3} />
            </PaneToggle>

            <ShapeDropdown />
            <Tooltip>타원</Tooltip>
        </Page>
    );
}
